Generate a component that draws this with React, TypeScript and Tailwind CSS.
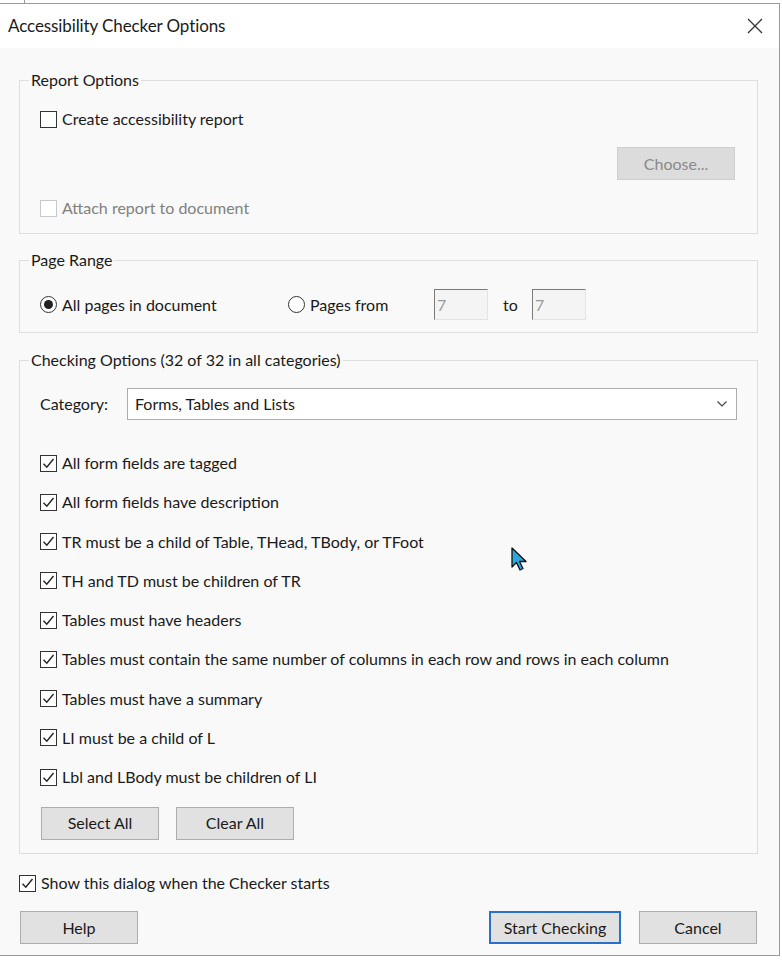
import React from "react";

const font = { fontFamily: "Lato, 'Open Sans', sans-serif" };

function CheckBox({ checked, disabled }: { checked?: boolean; disabled?: boolean }) {
  return (
    <span
      className={
        "inline-flex h-[17px] w-[17px] shrink-0 items-center justify-center border bg-white " +
        (disabled ? "border-[#c8c8c8]" : "border-[#333333]")
      }
    >
      {checked && (
        <svg width="13" height="13" viewBox="0 0 13 13">
          <path d="M1.5 6.8 L4.8 10.2 L11.5 2" fill="none" stroke="#222" strokeWidth="1.4" />
        </svg>
      )}
    </span>
  );
}

function Radio({ checked }: { checked?: boolean }) {
  return (
    <span className="inline-flex h-[17px] w-[17px] shrink-0 items-center justify-center rounded-full border border-[#333333] bg-white">
      {checked && <span className="h-[9px] w-[9px] rounded-full bg-[#222]" />}
    </span>
  );
}

function Btn({ children, className = "" }: { children: React.ReactNode; className?: string }) {
  return (
    <div
      className={
        "flex h-[33px] w-[118px] items-center justify-center border border-[#adadad] bg-[#e1e1e1] text-[#1a1a1a] " +
        className
      }
    >
      {children}
    </div>
  );
}

const items = [
  "All form fields are tagged",
  "All form fields have description",
  "TR must be a child of Table, THead, TBody, or TFoot",
  "TH and TD must be children of TR",
  "Tables must have headers",
  "Tables must contain the same number of columns in each row and rows in each column",
  "Tables must have a summary",
  "LI must be a child of L",
  "Lbl and LBody must be children of LI",
];

export default function App() {
  return (
    <div className="relative h-[962px] w-[782px] overflow-hidden bg-white text-[#1a1a1a]" style={font}>
      <div className="h-[3px] w-[779px]">
        <div className="ml-[24px] h-[3px] w-px bg-[#9a9a9a]" />
      </div>
      <div className="flex h-[953px] w-[780px] flex-col border-t border-r border-b border-[#9a9a9a]">
        {/* title bar */}
        <div className="flex h-[44px] items-center justify-between bg-white pl-[8px] pr-[16px]">
          <span className="text-[17px] tracking-[-0.1px]">Accessibility Checker Options</span>
          <svg width="16" height="16" viewBox="0 0 16 16">
            <path d="M1 1 L15 15 M15 1 L1 15" stroke="#333" strokeWidth="1.3" />
          </svg>
        </div>
        {/* body */}
        <div className="relative flex flex-1 flex-col bg-[#f9f9f9] pl-[19px] pr-[21px] text-[16px]">
          {/* Report Options */}
          <fieldset className="mt-[22px] h-[164px] border border-[#dedede]">
            <legend className="ml-[9px] h-[20px] px-[2px] leading-[20px]">Report Options</legend>
            <div className="mt-[19px] flex h-[20px] items-center pl-[20px]">
              <CheckBox />
              <span className="ml-[5px]">Create accessibility report</span>
            </div>
            <div className="mt-[18px] flex justify-end pr-[22px]">
              <div className="flex h-[33px] w-[118px] items-center justify-center border border-[#cfcfcf] bg-[#dcdcdc] text-[#8a8a8a]">
                Choose...
              </div>
            </div>
            <div className="mt-[18px] flex h-[20px] items-center pl-[20px] text-[#808080]">
              <CheckBox disabled />
              <span className="ml-[5px]">Attach report to document</span>
            </div>
          </fieldset>

          {/* Page Range */}
          <fieldset className="mt-[16px] h-[83px] border border-[#dedede]">
            <legend className="ml-[9px] h-[20px] px-[2px] leading-[20px]">Page Range</legend>
            <div className="mt-[19px] flex h-[31px] items-center pl-[20px]">
              <span className="flex w-[248px] items-center">
                <Radio checked />
                <span className="ml-[5px]">All pages in document</span>
              </span>
              <span className="flex w-[146px] items-center">
                <Radio />
                <span className="ml-[5px]">Pages from</span>
              </span>
              <div className="flex h-[31px] w-[54px] items-center border-t border-l border-r border-b border-t-[#7a7a7a] border-l-[#7a7a7a] border-r-[#e3e3e3] border-b-[#e3e3e3] bg-[#f4f4f4] pl-[2px] text-[#9a9a9a]">
                7
              </div>
              <span className="ml-[15px] w-[29px]">to</span>
              <div className="flex h-[31px] w-[54px] items-center border-t border-l border-r border-b border-t-[#7a7a7a] border-l-[#7a7a7a] border-r-[#e3e3e3] border-b-[#e3e3e3] bg-[#f4f4f4] pl-[2px] text-[#9a9a9a]">
                7
              </div>
            </div>
          </fieldset>

          {/* Checking Options */}
          <fieldset className="mt-[17px] h-[504px] border border-[#dedede]">
            <legend className="ml-[9px] h-[20px] px-[2px] leading-[20px]">
              Checking Options (32 of 32 in all categories)
            </legend>
            <div className="mt-[18px] flex h-[32px] items-center pl-[20px]">
              <span className="w-[87px]">Category:</span>
              <div className="flex h-[32px] w-[610px] items-center justify-between border border-[#adadad] bg-white pl-[7px] pr-[8px]">
                <span>Forms, Tables and Lists</span>
                <svg width="12" height="8" viewBox="0 0 12 8">
                  <path d="M1.5 1.5 L6 6 L10.5 1.5" fill="none" stroke="#444" strokeWidth="1.2" />
                </svg>
              </div>
            </div>
            <div className="mt-[23.4px] flex flex-col pl-[20px]">
              {items.map((t) => (
                <div key={t} className="flex h-[39.25px] items-center">
                  <CheckBox checked />
                  <span className="ml-[5px]">{t}</span>
                </div>
              ))}
            </div>
            <div className="mt-[10px] flex gap-[17px] pl-[21px]">
              <Btn>Select All</Btn>
              <Btn>Clear All</Btn>
            </div>
          </fieldset>

          <div className="mt-[19px] flex h-[20px] items-center">
            <CheckBox checked />
            <span className="ml-[5px]">Show this dialog when the Checker starts</span>
          </div>

          <div className="mt-[18px] flex items-center pr-[1px]">
            <Btn className="ml-[1px]">Help</Btn>
            <div className="ml-auto flex items-center">
              <div className="flex h-[33px] w-[132px] items-center justify-center border-2 border-[#2a72c8] bg-[#e1e1e1]">
                Start Checking
              </div>
              <Btn className="ml-[18px]">Cancel</Btn>
            </div>
          </div>

          {/* mouse cursor */}
          <svg className="absolute left-[511px] top-[499px]" width="18" height="26" viewBox="0 0 18 26">
            <path
              d="M1 1 L1 20 L5.5 15.5 L9 23 L12 21.5 L8.5 14.5 L15 14.5 Z"
              fill="#29a8e0"
              stroke="#111"
              strokeWidth="1.3"
              strokeLinejoin="round"
            />
          </svg>
        </div>
      </div>
    </div>
  );
}
